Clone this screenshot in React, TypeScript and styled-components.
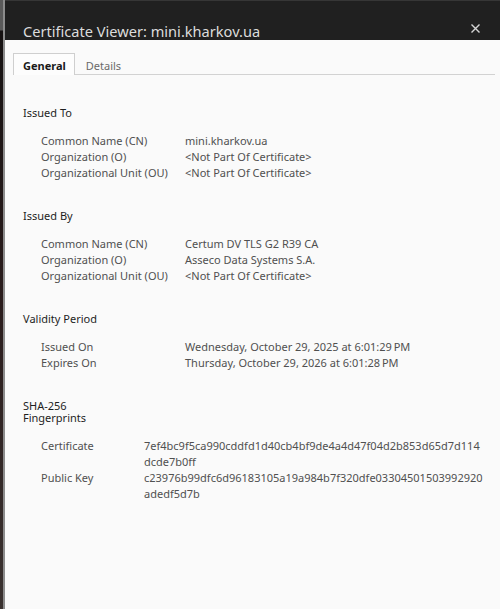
import React from "react";
import styled, { createGlobalStyle } from "styled-components";

const Global = createGlobalStyle`
  html, body { margin: 0; padding: 0; }
  body { font-family: "Noto Sans", "Open Sans", sans-serif; }
`;

const Desktop = styled.div`
  display: flex;
  height: 609px;
  width: 500px;
  background: linear-gradient(180deg, #5a5a5a 0px, #5a5a5a 30px, #161212 31px, #2a1c1c 300px, #3a3230 609px);
  overflow: hidden;
`;

const Dialog = styled.div`
  flex: 1;
  display: flex;
  flex-direction: column;
  margin-left: 3px;
  border-left: 2px solid #8c8c8c;
  border-right: 1px solid #3a3a3a;
  background: #fafafa;
`;

const TitleBar = styled.div`
  height: 40px;
  box-sizing: border-box;
  display: flex;
  align-items: flex-start;
  justify-content: space-between;
  padding: 22px 21px 0 18px;
  background: #202020;
  border-top: 1px solid #363636;
`;

const Title = styled.div`
  font-size: 14.6px;
  line-height: 17px;
  color: #dcdcdc;
`;

const CloseIcon = styled.svg`
  width: 9px;
  height: 9px;
  margin-top: 1px;
`;

const TabBar = styled.div`
  display: flex;
  margin: 13px 6px 0 8px;
  border-bottom: 1px solid #d2d2d2;
`;

const Tab = styled.div<{ $active?: boolean }>`
  height: 22px;
  box-sizing: border-box;
  display: flex;
  align-items: center;
  padding: ${(p) => (p.$active ? "1px 8px 0 9px" : "1px 10px 0 10px")};
  font-size: 11px;
  font-weight: ${(p) => (p.$active ? 700 : 400)};
  color: ${(p) => (p.$active ? "#1a1a1a" : "#6a6a6a")};
  border: 1px solid ${(p) => (p.$active ? "#cfcfcf" : "transparent")};
  border-bottom: none;
  background: ${(p) => (p.$active ? "#fdfdfd" : "transparent")};
  margin-bottom: -1px;
`;

const Content = styled.div`
  display: flex;
  flex-direction: column;
  padding: 32px 18px 0 18px;
  gap: 29px;
`;

const Section = styled.section`
  display: flex;
  flex-direction: column;
  gap: 14px;
`;

const Heading = styled.div`
  font-size: 11px;
  line-height: 12px;
  color: #1e1e1e;
`;

const Rows = styled.div<{ $labelWidth: number }>`
  display: grid;
  grid-template-columns: ${(p) => p.$labelWidth}px 1fr;
  padding-left: 18px;
  font-size: 11px;
  line-height: 16px;
  color: #505050;
`;

const Label = styled.div``;

const Value = styled.div`
  white-space: pre-line;
`;

type Row = [string, string];

const sections: { title: React.ReactNode; labelWidth: number; rows: Row[] }[] = [
  {
    title: "Issued To",
    labelWidth: 144,
    rows: [
      ["Common Name (CN)", "mini.kharkov.ua"],
      ["Organization (O)", "<Not Part Of Certificate>"],
      ["Organizational Unit (OU)", "<Not Part Of Certificate>"],
    ],
  },
  {
    title: "Issued By",
    labelWidth: 144,
    rows: [
      ["Common Name (CN)", "Certum DV TLS G2 R39 CA"],
      ["Organization (O)", "Asseco Data Systems S.A."],
      ["Organizational Unit (OU)", "<Not Part Of Certificate>"],
    ],
  },
  {
    title: "Validity Period",
    labelWidth: 144,
    rows: [
      ["Issued On", "Wednesday, October 29, 2025 at 6:01:29\u202fPM"],
      ["Expires On", "Thursday, October 29, 2026 at 6:01:28\u202fPM"],
    ],
  },
  {
    title: (
      <>
        SHA-256
        <br />
        Fingerprints
      </>
    ),
    labelWidth: 103,
    rows: [
      ["Certificate", "7ef4bc9f5ca990cddfd1d40cb4bf9de4a4d47f04d2b853d65d7d114dcde7b0ff"],
      ["Public Key", "c23976b99dfc6d96183105a19a984b7f320dfe03304501503992920adedf5d7b"],
    ],
  },
];

const wrapHex = (v: string) =>
  /^[0-9a-f]{64}$/.test(v) ? v.slice(0, 55) + "\n" + v.slice(55) : v;

export default function App() {
  return (
    <>
      <Global />
      <Desktop>
        <Dialog>
          <TitleBar>
            <Title>Certificate Viewer: mini.kharkov.ua</Title>
            <CloseIcon viewBox="0 0 9 9">
              <path d="M0.5 0.5 L8.5 8.5 M8.5 0.5 L0.5 8.5" stroke="#d4d4d4" strokeWidth="1.4" fill="none" />
            </CloseIcon>
          </TitleBar>
          <TabBar>
            <Tab $active>General</Tab>
            <Tab>Details</Tab>
          </TabBar>
          <Content>
            {sections.map((s, i) => (
              <Section key={i}>
                <Heading>{s.title}</Heading>
                <Rows $labelWidth={s.labelWidth}>
                  {s.rows.map(([l, v]) => (
                    <React.Fragment key={l}>
                      <Label>{l}</Label>
                      <Value>{wrapHex(v)}</Value>
                    </React.Fragment>
                  ))}
                </Rows>
              </Section>
            ))}
          </Content>
        </Dialog>
      </Desktop>
    </>
  );
}
